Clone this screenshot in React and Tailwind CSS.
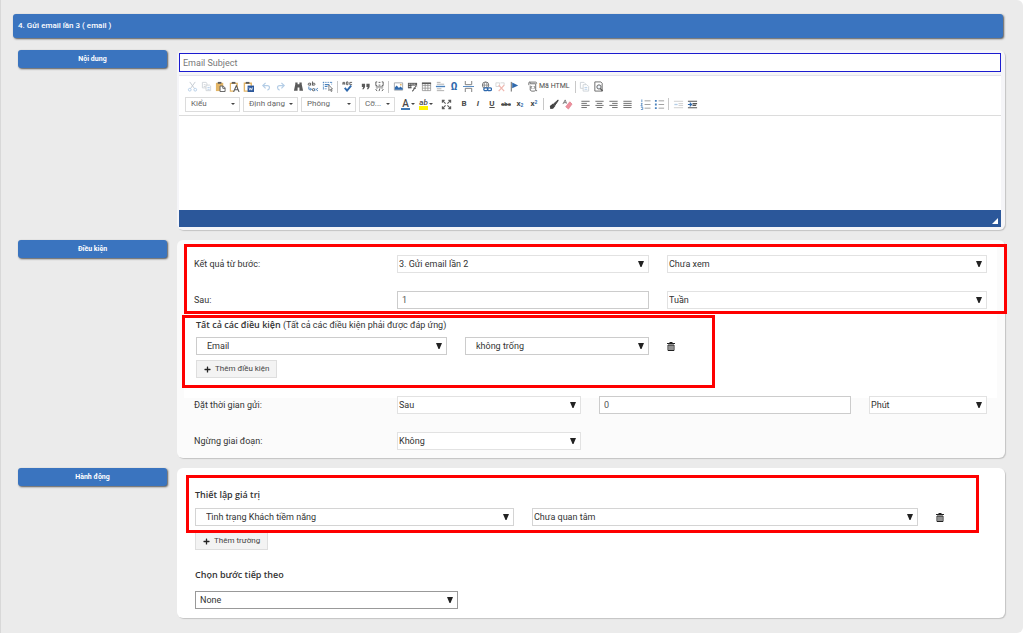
import { useState } from 'react'
import { FaPlus } from 'react-icons/fa'

const DARK = '#5a5a5a'
const BLUE = '#4a82bd'
const SAND = '#e3b566'

// Toolbar drawings, all on a 12x12 grid
const ICONS = {
  cut: (
    <g stroke="#c3c9d0" fill="none">
      <path d="M3 1l5 7M9 1L4 8" />
      <circle cx="3" cy="9.5" r="1.5" stroke="#b4cde6" />
      <circle cx="9" cy="9.5" r="1.5" stroke="#b4cde6" />
    </g>
  ),
  copy: (
    <g stroke="#d0d4d9" fill="#fff">
      <path d="M1.5 1.5h4l1 1v5h-5zM3 4h2M3 6h2" />
      <path d="M5.5 4.5h4l1 1v5h-5z" />
      <path d="M7 7h2.500M7 9h2.500" stroke="#b4cde6" />
    </g>
  ),
  paste: (
    <g>
      <path d="M1 2h8v9H1z" fill={SAND} />
      <path d="M3 1h4v2H3z" fill={DARK} />
      <path d="M5.500 5.500h3.500l2 2v4H5.500z" fill="#fff" stroke={DARK} />
      <path d="M8.500 5.500v2.500H11" fill="none" stroke={DARK} />
    </g>
  ),
  pasteText: (
    <g>
      <path d="M1.500 2.500h7.500v8.500H1.500z" fill="#fff" stroke={SAND} strokeWidth="1.300" />
      <path d="M3 1h4v2H3z" fill={DARK} />
      <path d="M5 12l3-7 3 7M6 9.500h4" fill="#fff" stroke={DARK} strokeWidth="1.200" />
    </g>
  ),
  pasteWord: (
    <g>
      <path d="M1.500 2.500h7.500v8.500H1.500z" fill="#fff" stroke={SAND} strokeWidth="1.500" />
      <path d="M3 1h4v2H3z" fill={DARK} />
      <path d="M5 5h7v7H5z" fill="#2b579a" />
      <path d="M6.500 7l1 3 1-2.500 1 2.500 1-3" fill="none" stroke="#fff" strokeWidth=".8" />
    </g>
  ),
  undo: <path d="M5 2L2 5l3 3M2 5h5c3 0 3 4 0 5" fill="none" stroke="#b4cde6" strokeWidth="1.300" />,
  redo: <path d="M7 2l3 3-3 3M10 5H5c-3 0-3 4 0 5" fill="none" stroke="#b4cde6" strokeWidth="1.300" />,
  find: (
    <path d="M2.500 1.500h2.500v2h2v-2h2.500v2L11 10.500H7V7H5v3.500H1L2.500 3.500z" fill={DARK} />
  ),
  replace: (
    <g fill="none">
      <circle cx="2.500" cy="3.500" r="1.200" stroke={DARK} />
      <path d="M4 2v3M6 .5v4.500" stroke={DARK} />
      <circle cx="7.500" cy="3.500" r="1.200" stroke={DARK} />
      <path d="M2 6v3h2.500M3.500 7.500L5 9 3.500 10.500" stroke={BLUE} />
      <circle cx="7" cy="9.500" r="1.200" stroke={DARK} />
      <path d="M8.500 8v3M12 8.300c-2-.8-2.500 2.400 0 2.200" stroke={BLUE} />
    </g>
  ),
  selectAll: (
    <g fill="none">
      <path d="M1 1.500h10M1 8.500h5M1.500 1v8M10.500 1v3" stroke={BLUE} strokeDasharray="1.500 1" />
      <path d="M3 4h5M3 6h3" stroke={BLUE} strokeWidth="1.200" />
      <path d="M7.500 4.500v6l1.500-1.500 1 2.500 1-.5-1-2.300h1.500z" stroke={DARK} fill="#fff" strokeWidth=".8" />
    </g>
  ),
  spell: (
    <g fill="none">
      <path d="M1 4V1.500h2V4M1 3h2M5 1v3h1.500V1H5M11 1.500H8.500v2.500H11" stroke={DARK} />
      <path d="M3 7.500l2.500 3L10 5" stroke="#2f69ad" strokeWidth="2" />
    </g>
  ),
  quote: (
    <path d="M2 3h3.500v3.500L4 9H2.500l1-2.500H2zM7 3h3.500v3.500L9 9H7.500l1-2.500H7z" fill={DARK} />
  ),
  div: (
    <path
      d="M3.500 1H2v4h1.500M8.500 1H10v4H8.500M5 1.500h2M5 4.500h2M2 6.500h8M3.500 8L2 9.500 3.500 11M6.500 8l-1 3M8.500 8L10 9.500 8.500 11"
      fill="none"
      stroke={DARK}
    />
  ),
  image: (
    <g>
      <path d="M1.500 2h9v8h-9z" fill="#fff" stroke="#a0a4aa" />
      <path d="M2 9.500V7l2-2 2.500 2.500L8 6l2.500 2v1.500z" fill="#2f69ad" />
      <circle cx="8.500" cy="4" r="1" fill={SAND} />
    </g>
  ),
  media: (
    <g>
      <path d="M1 2h10v6H1z" fill={DARK} />
      <path d="M2 3.500h8M2 6h8" stroke="#fff" strokeDasharray="1 1" />
      <path d="M5 5h6v6H5z" fill="#fff" />
      <path d="M10.500 5.500c-2.500 0-2.500 5.500-5 5.500M7 8h2.500" stroke={DARK} fill="none" strokeWidth="1.200" />
    </g>
  ),
  table: (
    <g fill="none" stroke="#888">
      <path d="M1.500 2.500h9v8h-9zM1.500 5h9M1.500 7.800h9M4.500 3v7.500M7.500 3v7.500" strokeWidth=".8" />
      <path d="M1 2.500h10" stroke={DARK} strokeWidth="1.800" />
    </g>
  ),
  hr: (
    <g fill="none">
      <path d="M2 1.500h4M2 3.500h8M2 8.500h5M2 10.500h8" stroke="#aaa" />
      <path d="M1 6h10" stroke={BLUE} strokeWidth="1.500" />
    </g>
  ),
  pageBreak: (
    <g fill="none" stroke="#777">
      <path d="M2.500 0v4h7V0M2.500 12V8h7v4" />
      <path d="M0 6h12" stroke={BLUE} />
    </g>
  ),
  link: (
    <g fill="none">
      <circle cx="5" cy="4.500" r="3.500" stroke="#666" />
      <path d="M1.500 4.500h7M5 1c-2 2-2 5 0 7M5 1c2 2 2 5 0 7" stroke="#777" strokeWidth=".8" />
      <rect x="3" y="7.500" width="4.500" height="3" rx="1.500" stroke="#2f69ad" fill="#fff" strokeWidth="1.300" />
      <rect x="7" y="7.500" width="4.500" height="3" rx="1.500" stroke="#2f69ad" strokeWidth="1.300" />
    </g>
  ),
  unlink: (
    <g fill="none">
      <path d="M1 2h4v4H1zM6 2h4v3" stroke="#d4d4d4" />
      <path d="M4 4.500l6 6.500M10 4.500L4 11" stroke="#f0b8b0" strokeWidth="1.400" />
    </g>
  ),
  anchor: (
    <g>
      <path d="M2.500 1v10.500" stroke={DARK} />
      <path d="M3.500 1.500L10 5 3.500 8z" fill="#2f69ad" />
    </g>
  ),
  source: (
    <g fill="none" stroke={DARK} strokeWidth=".9">
      <path d="M2 4.500V2c0-1.300 1.500-1 1.500 0v1h6M3 1.200h6.500c1 0 1 1 1 1.800M3.500 5v5c0 1.500 6 1.500 6 0V3" />
      <path d="M5.500 5.500L4.500 7l1 1.500M7.500 5.500l1 1.500-1 1.500M9.500 10.500H11" />
    </g>
  ),
  templates: (
    <g fill="#fff" stroke="#cdd2d8">
      <path d="M1.500 1.500h4l1.500 1.500v5H1.500z" />
      <path d="M4.500 4h4L10.500 6v5h-6z" />
      <path d="M6 7h3M6 9h3" stroke="#b4cde6" />
    </g>
  ),
  preview: (
    <g fill="none" stroke="#666">
      <path d="M10 11V2.500L8.500 1H2v10h8" />
      <circle cx="6.500" cy="6.500" r="2.300" fill="#eef4fb" stroke={DARK} />
      <path d="M8 8.300l2.500 2.500" stroke={DARK} strokeWidth="1.500" />
    </g>
  ),
  maximize: (
    <path
      d="M1.500 4V1.500H4M8 1.500h2.500V4M10.500 8v2.500H8M4 10.500H1.500V8M2 2l3 3M10 2L7 5M10 10L7 7M2 10l3-3"
      fill="none"
      stroke={DARK}
      strokeWidth="1.200"
    />
  ),
  brush: (
    <g fill="#444">
      <path d="M11 1L6 5.500l1.500 1.500L11 2z" stroke="#444" />
      <path d="M5.500 5L2 7.500l.5 3.500 3-.5L8 7.500z" />
    </g>
  ),
  eraser: (
    <g>
      <path d="M1 5.500L3.500 1 5 5M2 4h2.500" fill="none" stroke="#777" />
      <path d="M8.500 3L11 5.500 7 11 4 8.500z" fill="#ee8f9d" stroke="#d9707f" strokeWidth=".6" />
    </g>
  ),
  alignLeft: <path d="M1.500 2.500h9M1.500 4.800h6M1.500 7h9M1.500 9.300h6" stroke="#666" />,
  alignCenter: <path d="M1.500 2.500h9M3 4.800h6M1.500 7h9M3 9.300h6" stroke="#666" />,
  alignRight: <path d="M1.500 2.500h9M4.500 4.800h6M1.500 7h9M4.500 9.300h6" stroke="#666" />,
  justify: <path d="M1.500 2.500h9M1.500 4.800h9M1.500 7h9M1.500 9.300h9" stroke="#666" />,
  ordered: (
    <g fill="none">
      <path d="M2 .5v3M1 5h1.500L1 7.500h2M1 9h2v2.500H1" stroke={BLUE} strokeWidth=".9" />
      <path d="M5 2h6.500M5 6h6.500M5 10h6.500" stroke="#999" />
    </g>
  ),
  bullets: (
    <g>
      <path d="M1 1h2v2H1zM1 5h2v2H1zM1 9h2v2H1z" fill={BLUE} />
      <path d="M5 2h6M5 6h6M5 10h6" stroke="#999" />
    </g>
  ),
  outdent: (
    <g fill="none" stroke="#ccc">
      <path d="M1 2.500h10M6 5h5M6 7h5M1 9.500h10" />
      <path d="M5 6H1.500" stroke="#b4cde6" strokeWidth="1.500" />
    </g>
  ),
  indent: (
    <g fill="none" stroke="#555">
      <path d="M1 2.500h10M6 5h5M6 7h4M1 9.500h10" strokeWidth="1.200" />
      <path d="M1 6h4M3 4l2 2-2 2" stroke="#2f69ad" strokeWidth="1.300" />
    </g>
  ),
}

const ROW_ONE = [
  ['cut', 'copy', 'paste', 'pasteText', 'pasteWord'],
  ['undo', 'redo'],
  ['find', 'replace', 'selectAll'],
  '|',
  ['spell'],
  ['quote', 'div'],
  '|',
  ['image', 'media', 'table', 'hr', 'omega', 'pageBreak'],
  ['link', 'unlink', 'anchor'],
  ['source'],
  '|',
  ['templates', 'preview'],
]

const ROW_TWO = [
  ['textColor', 'bgColor'],
  ['maximize'],
  ['bold', 'italic', 'underline', 'strike', 'sub', 'sup'],
  '|',
  ['brush', 'eraser'],
  ['alignLeft', 'alignCenter', 'alignRight', 'justify'],
  ['ordered', 'bullets'],
  '|',
  ['outdent', 'indent'],
]

const LETTERS = {
  omega: <span className="text-[10px] font-bold text-[#2f69ad]">Ω</span>,
  bold: <b>B</b>,
  italic: <b className="italic">I</b>,
  underline: <b className="underline">U</b>,
  strike: <b className="text-[6px] line-through">abc</b>,
  sub: <b>x<sub className="text-[5px] text-[#2f69ad]">2</sub></b>,
  sup: <b>x<sup className="text-[5px] text-[#2f69ad]">2</sup></b>,
  textColor: <span className="border-b-2 border-[#3f78b5] px-px text-[10px] leading-[9px] font-medium">A</span>,
  bgColor: <span className="border-b-4 border-[#fff200] text-[8px] leading-[7px] font-medium italic">ab</span>,
}

function Icon({ name }) {
  return (
    <svg viewBox="0 0 12 12" className="h-[11px] w-[11px] shrink-0" aria-hidden="true">
      {ICONS[name]}
    </svg>
  )
}

function ToolButton({ name }) {
  const colored = name === 'textColor' || name === 'bgColor'
  const width = colored ? 'w-[18px]' : name === 'selectAll' ? 'w-4' : name === 'source' ? 'px-0.5' : 'w-[14px]'
  return (
    <button
      type="button"
      aria-label={name}
      className={`flex h-[14px] items-center justify-center text-[8px] leading-none text-[#4a4a4a] ${width}`}
    >
      {LETTERS[name] || <Icon name={name} />}
      {name === 'source' && <span className="px-px text-[7px]">Mã HTML</span>}
      {colored && <SmallCaret />}
    </button>
  )
}

function SmallCaret() {
  return (
    <svg viewBox="0 0 4 2" className="ml-px h-0.5 w-1 shrink-0" aria-hidden="true">
      <path d="M0 0h4L2 2z" fill="#444" />
    </svg>
  )
}

function ToolGroups({ groups }) {
  return groups.map((g, i) =>
    g === '|' ? (
      <span key={i} className="-mx-0.5 h-3 w-px bg-[#c8c8c8]" />
    ) : (
      <div key={i} className="flex">
        {g.map(name => <ToolButton key={name} name={name} />)}
      </div>
    )
  )
}

function Combo({ label, className }) {
  return (
    <button
      type="button"
      className={`flex h-[15px] items-center justify-between border border-[#dcdcdc] pr-1 pl-[5px] text-[8px] leading-none text-[#666] ${className}`}
    >
      {label}
      <SmallCaret />
    </button>
  )
}

function Select({ id, label, value, border = 'border-[#e2e2e2]', pad = 'pl-px', className = '' }) {
  return (
    <div className={`relative ${className}`}>
      <select
        id={id}
        aria-label={label}
        className={`block h-[18px] w-full appearance-none border bg-white pr-5 text-[#333] ${border} ${pad}`}
      >
        <option>{value}</option>
      </select>
      <svg viewBox="0 0 6 6" className="pointer-events-none absolute top-[6px] right-[5px] h-[6px] w-[6px]" aria-hidden="true">
        <path d="M0 0h6L3.500 6h-1z" fill="#222" />
      </svg>
    </div>
  )
}

function TextInput({ id, label, initial, className = '' }) {
  const [value, setValue] = useState(initial)
  return (
    <input
      id={id}
      aria-label={label}
      value={value}
      onChange={e => setValue(e.target.value)}
      className={`h-[18px] w-full min-w-0 border border-[#ccc] bg-white px-1 text-[#555] ${className}`}
    />
  )
}

function AddButton({ children }) {
  return (
    <button
      type="button"
      className="flex h-[18px] w-fit items-center gap-1 border border-[#dedede] bg-[#f3f3f3] px-[7px] text-[8px] text-[#444]"
    >
      <FaPlus className="h-[7px] w-[7px] text-[#222]" />
      {children}
    </button>
  )
}

function TrashButton() {
  return (
    <button type="button" aria-label="Xóa" className="flex h-[18px] w-2 items-center justify-center">
      <svg viewBox="0 0 8 9" className="h-[9px] w-2 shrink-0" aria-hidden="true">
        <path d="M0 1.500h8M2.500 .5h3" stroke="#222" />
        <path d="M1 3h6v5.500H1z" fill="#ddd" stroke="#222" />
        <path d="M3 3v5M5 3v5" stroke="#222" strokeWidth=".8" />
      </svg>
    </button>
  )
}

function Section({ title, className, children }) {
  return (
    <section className="flex items-start gap-[10px]">
      <button
        type="button"
        className="h-[18px] w-[149px] shrink-0 rounded-[3px] bg-[#3a74bf] text-[7px] font-bold text-white shadow-[1px_1px_2px_#555]"
      >
        {title}
      </button>
      <div className={`relative min-w-0 flex-1 rounded-md shadow-[1px_1px_1px_#c4c4c4] ${className}`}>
        {children}
      </div>
    </section>
  )
}

// Red frame laid over the fields to look at
function Highlight({ className }) {
  return <div className={`pointer-events-none absolute border-3 border-[#fe0000] ${className}`} />
}

function Editor() {
  return (
    <div className="border-t border-[#e3e3ea] bg-white">
      <div className="flex h-10 flex-col justify-center gap-[3px] border-b border-[#dcdcdc] pl-[6px]">
        <div className="flex items-center gap-1">
          <ToolGroups groups={ROW_ONE} />
        </div>
        <div className="flex items-center gap-1">
          <div className="flex gap-[3px]">
            <Combo label="Kiểu" className="w-[55px]" />
            <Combo label="Định dạng" className="w-[55px]" />
            <Combo label="Phông" className="w-[55px]" />
            <Combo label="Cỡ..." className="w-9" />
          </div>
          <ToolGroups groups={ROW_TWO} />
        </div>
      </div>
      <textarea aria-label="Nội dung email" className="block h-[94px] w-full resize-none p-2 outline-none" />
      <div className="flex h-[17px] items-end justify-end bg-[#2b579a] p-[3px]">
        <svg viewBox="0 0 6 6" className="h-[6px] w-[6px]" aria-hidden="true">
          <path d="M6 0v6H0z" fill="#fff" />
        </svg>
      </div>
    </div>
  )
}

export default function App() {
  return (
    <div className="bg-white pb-[6px] font-['Roboto',sans-serif] text-[9px] leading-[12px] text-[#333]">
      <main className="mr-px rounded-r-md border-l border-[#d8d8d8] bg-[#ebebeb] pt-[14px] pr-5 pb-[15px] pl-3">
        <h1 className="flex h-6 items-center rounded-[3px] bg-[#3a74bf] px-[5px] text-[8px] font-medium text-white shadow-[1px_1px_2px_#555]">
          4. Gửi email lần 3 ( email )
        </h1>

        <div className="-mr-0.5 mt-3 flex flex-col gap-[10px] pl-[5px]">
          <Section title="Nội dung" className="bg-[#f5f5f8] pt-[3px] pr-1 pb-[3px] pl-0.5">
            <input
              aria-label="Email Subject"
              placeholder="Email Subject"
              className="mb-[3px] block h-[19px] w-full border border-[#1c1ccf] bg-white px-[3px] placeholder:text-[#777]"
            />
            <Editor />
          </Section>

          <Section title="Điều kiện" className="bg-[#fbfbfb] pt-[7px] pr-2 pb-2 pl-[7px]">
            <div className="grid gap-y-[18px] bg-white px-[10px] pt-2 pb-5">
              <div className="grid grid-cols-[185px_252fr_320fr] items-center gap-x-[18px]">
                <label htmlFor="fromStep">Kết quả từ bước:</label>
                <Select id="fromStep" value="3. Gửi email lần 2" />
                <Select label="Kết quả" value="Chưa xem" />
              </div>
              <div className="grid grid-cols-[185px_252fr_320fr] items-center gap-x-[18px]">
                <label htmlFor="after">Sau:</label>
                <TextInput id="after" initial="1" />
                <Select label="Đơn vị" value="Tuần" />
              </div>
              <div className="-mt-2 pl-0.5">
                <h2 className="mb-[6px]">
                  <span className="font-['Open_Sans',sans-serif] font-semibold">Tất cả các điều kiện</span>
                  {' '}(Tất cả các điều kiện phải được đáp ứng)
                </h2>
                <div className="mb-[5px] grid grid-cols-[251fr_184fr_320fr] gap-x-[18px]">
                  <Select label="Trường" value="Email" border="border-[#ccc]" pad="pl-[10px]" />
                  <Select label="Phép so sánh" value="không trống" border="border-[#ccc]" pad="pl-[10px]" />
                  <TrashButton />
                </div>
                <AddButton>Thêm điều kiện</AddButton>
              </div>
            </div>
            <div className="-mt-0.5 grid gap-y-[18px] px-[10px]">
              <div className="grid grid-cols-[185px_184fr_252fr_118fr] items-center gap-x-[18px]">
                <label htmlFor="sendTime">Đặt thời gian gửi:</label>
                <Select id="sendTime" value="Sau" />
                <TextInput label="Số lượng" initial="0" />
                <Select label="Đơn vị thời gian" value="Phút" />
              </div>
              <div className="grid grid-cols-[185px_184fr_252fr_118fr] items-center gap-x-[18px]">
                <label htmlFor="stop">Ngừng giai đoạn:</label>
                <Select id="stop" value="Không" />
              </div>
            </div>
            <Highlight className="top-1 -right-0.5 left-[7px] h-[70px]" />
            <Highlight className="top-[75px] left-[5px] h-[73px] w-[64.400%]" />
          </Section>

          <Section title="Hành động" className="bg-white pt-[21px] pr-[61px] pb-[9px] pl-[18px]">
            <h2 className="mb-[7px] font-['Open_Sans',sans-serif] font-semibold">Thiết lập giá trị</h2>
            <div className="mb-[6px] flex gap-[18px]">
              <Select label="Trường" value="Tình trạng Khách tiềm năng" border="border-[#d4d4d4]" pad="pl-[10px]" className="flex-[319]" />
              <Select label="Giá trị" value="Chưa quan tâm" border="border-[#d4d4d4]" className="flex-[386]" />
              <TrashButton />
            </div>
            <AddButton>Thêm trường</AddButton>
            <h2 className="mt-[19px] mb-[10px] font-['Open_Sans',sans-serif] font-semibold">
              <label htmlFor="nextStep">Chọn bước tiếp theo</label>
            </h2>
            <Select id="nextStep" value="None" border="border-[#999]" pad="pl-1" className="w-[263px]" />
            <Highlight className="top-[7px] right-[26px] left-[9px] h-[58px]" />
          </Section>
        </div>
      </main>
    </div>
  )
}
